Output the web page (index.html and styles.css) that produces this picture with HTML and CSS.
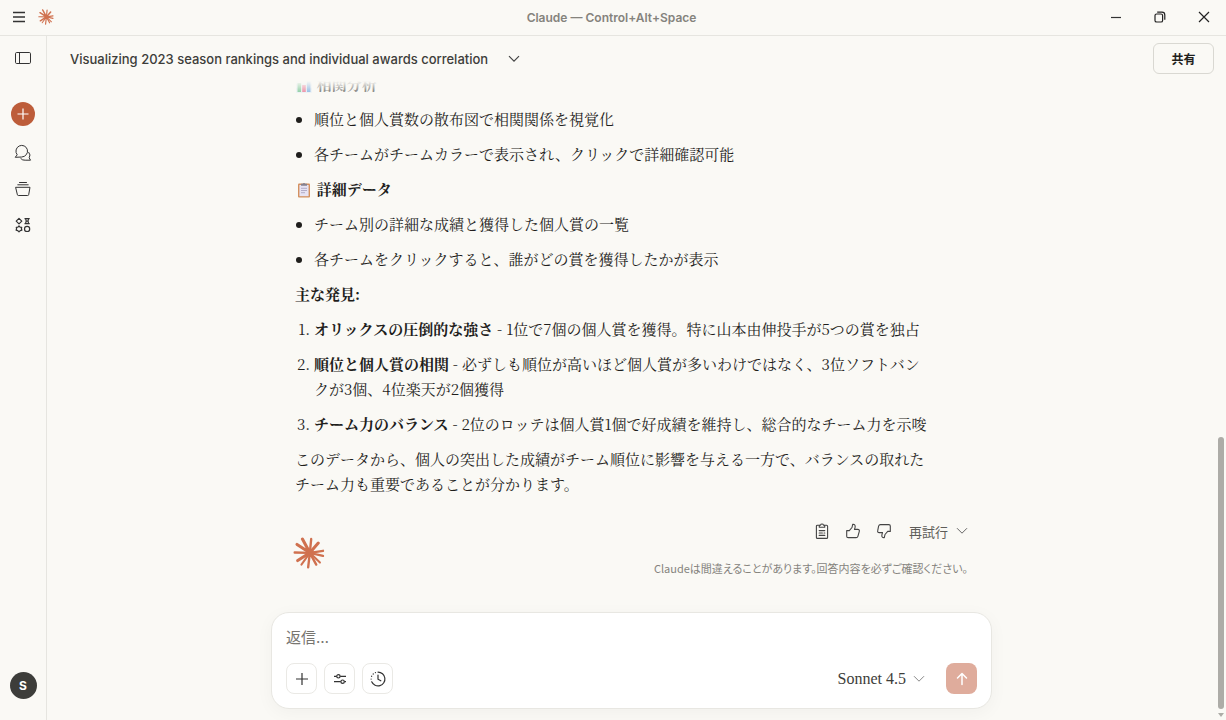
FILE: index.html
```html
<!DOCTYPE html>
<html lang="ja">
<head>
    <meta charset="UTF-8">
    <meta name="viewport" content="width=device-width, initial-scale=1.0">
    <title>Claude</title>
    <link rel="stylesheet" href="styles.css">
</head>
<body>

    <!-- shared logo -->
    <svg class="defs" aria-hidden="true">
        <symbol id="burst" viewBox="40 53 95 95">
            <g stroke="#d0714f" stroke-linecap="round" fill="none">
                <path stroke-width="9" d="M90 100L68 59M90 100L115 71M90 100L52 75M90 100L54 123"/>
                <path stroke-width="7" d="M90 100L94 59M90 100L129 94M90 100L129 109M90 100L109 135M90 100L85 143M90 100L45 99"/>
                <path stroke-width="6" d="M90 100L120 129M90 100L65 135"/>
            </g>
            <circle cx="90" cy="100" r="12" fill="#d0714f"/>
        </symbol>
    </svg>

    <header class="titlebar">
        <div class="titlebar-left">
            <button class="icon-btn" aria-label="メニュー">
                <svg width="14" height="14" viewBox="0 0 14 14" stroke="#333" stroke-width="1.5"><path d="M1 2.5h12M1 7h12M1 11.5h12"/></svg>
            </button>
            <svg class="logo-small" width="16" height="16"><use href="#burst"/></svg>
        </div>
        <div class="window-title">Claude — Control+Alt+Space</div>
        <div class="window-controls">
            <button class="icon-btn" aria-label="最小化">
                <svg width="12" height="12" viewBox="0 0 12 12" stroke="#333" stroke-width="1.2"><path d="M1 6.5h10"/></svg>
            </button>
            <button class="icon-btn" aria-label="元に戻す">
                <svg width="12" height="12" viewBox="0 0 12 12" stroke="#222" stroke-width="1.2" fill="none"><rect x="1" y="3" width="7.6" height="8" rx="1.6"/><path d="M3.2 1.2H8a2.8 2.8 0 0 1 2.8 2.8v4.8"/></svg>
            </button>
            <button class="icon-btn" aria-label="閉じる">
                <svg width="12" height="12" viewBox="0 0 12 12" stroke="#222" stroke-width="1.2"><path d="M1 1l10 10M11 1L1 11"/></svg>
            </button>
        </div>
    </header>

    <div class="app">
        <nav class="sidebar">
            <button class="icon-btn toggle" aria-label="サイドバー">
                <svg width="18" height="14" viewBox="0 0 18 14" fill="none" stroke="#333"><rect x="1.5" y="1.5" width="15" height="11" rx="1.2"/><path d="M5.5 1.5v11"/></svg>
            </button>
            <button class="icon-btn new-chat" aria-label="新規チャット">
                <svg width="12" height="12" viewBox="0 0 12 12" stroke="#fff" stroke-width="1.2"><path d="M6 .5v11M.5 6h11"/></svg>
            </button>
            <button class="icon-btn" aria-label="チャット">
                <svg width="18" height="18" viewBox="0 0 18 18" fill="none" stroke="#333" stroke-linejoin="round" stroke-linecap="round"><path d="M1.5 13l1.7-2.2A5.8 5.8 0 1 1 8 13z"/><path d="M14.8 8.4a4.4 4.4 0 0 1 .4 5.4l1.3 2.4h-5.3a5 5 0 0 1-4.4-1.6"/></svg>
            </button>
            <button class="icon-btn" aria-label="プロジェクト">
                <svg width="18" height="18" viewBox="0 0 18 18" fill="none" stroke="#333" stroke-linejoin="round" stroke-linecap="round"><path d="M5.5 2.5h7M3.8 4.8h10.4M2 7.3h14l-1.3 7.3a1 1 0 0 1-1 .9H4.3a1 1 0 0 1-1-.9z"/></svg>
            </button>
            <button class="icon-btn" aria-label="アーティファクト">
                <svg width="18" height="18" viewBox="0 0 18 18" fill="none" stroke="#333" stroke-width="1.2" stroke-linejoin="round"><path d="M5 2.3l2.8 2.8L5 7.9 2.2 5.1z"/><path d="M10.5 2.6h5.2M10.5 7.6h5.2M11.6 2.6c.7 1.5.7 3.5 0 5M14.6 2.6c-.7 1.5-.7 3.5 0 5M11.5 5.1h3.2"/><path d="M5 10l1.1 1.2 1.6.1-.3 1.5.5 1.4-1.6.4L5 15.8l-1.3-1.2-1.6-.4.5-1.4-.3-1.5 1.6-.1z"/><circle cx="13.1" cy="12.9" r="2.6"/></svg>
            </button>
            <button class="avatar" aria-label="アカウント">S</button>
        </nav>

        <main class="main">
            <div class="chat-header">
                <button class="chat-title">
                    Visualizing 2023 season rankings and individual awards correlation
                    <svg width="12" height="8" viewBox="0 0 12 8" fill="none" stroke="#444" stroke-width="1.2"><path d="M1 1.2l5 5 5-5"/></svg>
                </button>
                <button class="share-btn">共有</button>
            </div>

            <div class="thread">
                <div class="column">
                    <article class="message">
                        <p><strong>
                            <svg class="emoji" width="16" height="16" viewBox="0 0 16 16"><rect width="16" height="16" rx="1" fill="#e3edf5"/><path d="M0 4h16M0 8h16M0 12h16" stroke="#c9d9e6" stroke-width=".6"/><path fill="#3fae68" d="M1.5 6h3.6v9H1.5z"/><path fill="#e2436d" d="M6.2 8h3.6v7H6.2z"/><path fill="#4a90d9" d="M10.9 2h3.6v13h-3.6z"/></svg>
                            相関分析</strong></p>
                        <ul>
                            <li>順位と個人賞数の散布図で相関関係を視覚化</li>
                            <li>各チームがチームカラーで表示され、クリックで詳細確認可能</li>
                        </ul>
                        <p><strong>
                            <svg class="emoji" width="16" height="16" viewBox="0 0 16 16"><rect x="2" y="1.5" width="12" height="14" rx="1" fill="#d4915f"/><path fill="#e6e3f3" d="M3.4 3h9.2v11.2H3.4z"/><path fill="#85818f" d="M5 1.8h1.7a1.4 1.4 0 0 1 2.6 0H11v2H5z"/><path d="M5 6.3h6M5 8.5h6M5 10.7h4" stroke="#aba6c2" stroke-width=".9"/></svg>
                            詳細データ</strong></p>
                        <ul>
                            <li>チーム別の詳細な成績と獲得した個人賞の一覧</li>
                            <li>各チームをクリックすると、誰がどの賞を獲得したかが表示</li>
                        </ul>
                        <p><strong>主な発見:</strong></p>
                        <ol>
                            <li><strong>オリックスの圧倒的な強さ</strong> - 1位で7個の個人賞を獲得。特に山本由伸投手が5つの賞を独占</li>
                            <li><strong>順位と個人賞の相関</strong> - 必ずしも順位が高いほど個人賞が多いわけではなく、3位ソフトバンクが3個、4位楽天が2個獲得</li>
                            <li><strong>チーム力のバランス</strong> - 2位のロッテは個人賞1個で好成績を維持し、総合的なチーム力を示唆</li>
                        </ol>
                        <p>このデータから、個人の突出した成績がチーム順位に影響を与える一方で、バランスの取れたチーム力も重要であることが分かります。</p>
                    </article>

                    <div class="message-footer">
                        <svg class="logo-large" width="32" height="32"><use href="#burst"/></svg>
                        <div class="footer-right">
                            <div class="actions">
                                <button class="icon-btn" aria-label="コピー">
                                    <svg width="16" height="18" viewBox="0 0 16 18" fill="none" stroke="#444" stroke-width="1.1" stroke-linecap="round" stroke-linejoin="round"><path d="M5.3 3.2H3.4a1 1 0 0 0-1 1v11.2a1 1 0 0 0 1 1h9.2a1 1 0 0 0 1-1V4.2a1 1 0 0 0-1-1h-1.9"/><path d="M5.3 5.3V3.2h1.1a1.7 1.7 0 0 1 3.2 0h1.1v2.1zM5.2 8.6h5.6M5.2 11h3.2M10 11h.8M5.2 13.4h5.6"/></svg>
                                </button>
                                <button class="icon-btn" aria-label="良い回答">
                                    <svg width="16" height="16" viewBox="0 0 16 16" fill="none" stroke="#444" stroke-width="1.1" stroke-linejoin="round"><path d="M1.7 7.6h2.6l2.7-3.1.7-3.1c2-.3 2.8 1 2.4 2.8l-.6 2.2h3.3c1.2 0 1.8.8 1.5 1.9l-1.4 5c-.3.9-.9 1.3-1.8 1.3H3.2c-1 0-1.5-.5-1.5-1.4z"/></svg>
                                </button>
                                <button class="icon-btn" aria-label="悪い回答">
                                    <svg width="16" height="16" viewBox="0 0 16 16" fill="none" stroke="#444" stroke-width="1.1" stroke-linejoin="round"><path d="M14.3 8.4h-2.6L9 11.5l-.7 3.1c-2 .3-2.8-1-2.4-2.8l.6-2.2H3.2c-1.2 0-1.8-.8-1.5-1.9l.9-4.6c.3-.9.9-1.5 1.8-1.5h8.4c1 0 1.5.5 1.5 1.4z"/></svg>
                                </button>
                                <button class="retry-btn">再試行
                                    <svg width="12" height="8" viewBox="0 0 12 8" fill="none" stroke="#666"><path d="M1 1.2l5 5 5-5"/></svg>
                                </button>
                            </div>
                            <p class="disclaimer">Claudeは間違えることがあります。回答内容を必ずご確認ください。</p>
                        </div>
                    </div>
                </div>
            </div>

            <form class="composer">
                <textarea rows="1" placeholder="返信…" aria-label="返信"></textarea>
                <div class="composer-row">
                    <button type="button" class="tool-btn" aria-label="追加">
                        <svg width="14" height="14" viewBox="0 0 14 14" stroke="#333" stroke-width="1.2"><path d="M7 1v12M1 7h12"/></svg>
                    </button>
                    <button type="button" class="tool-btn" aria-label="設定">
                        <svg width="14" height="12" viewBox="0 0 14 12" fill="none" stroke="#333" stroke-width="1.2"><path d="M1 3.3h2.6M7.2 3.3H13M1 8.7h6.8M11.4 8.7H13"/><circle cx="5.4" cy="3.3" r="1.7"/><circle cx="9.6" cy="8.7" r="1.7"/></svg>
                    </button>
                    <button type="button" class="tool-btn" aria-label="履歴">
                        <svg width="16" height="16" viewBox="0 0 16 16" fill="none" stroke="#333" stroke-width="1.2" stroke-linecap="round"><path d="M8 1.1A6.9 6.9 0 1 1 1.7 10.8"/><path d="M8 4v4.2l2.8 1.6"/><path d="M1.1 8v.1M1.6 5.3l.1-.1M3.2 3l.1-.1M5.4 1.6h.1"/></svg>
                    </button>
                    <button type="button" class="model-btn">Sonnet 4.5
                        <svg width="12" height="8" viewBox="0 0 12 8" fill="none" stroke="#888"><path d="M1 1.2l5 5 5-5"/></svg>
                    </button>
                    <button type="submit" class="send-btn" aria-label="送信">
                        <svg width="14" height="14" viewBox="0 0 14 14" fill="none" stroke="#fff" stroke-width="1.5" stroke-linecap="round" stroke-linejoin="round"><path d="M7 12.5v-11M2.5 6L7 1.5 11.5 6"/></svg>
                    </button>
                </div>
            </form>

            <div class="scrollbar"><span class="thumb"></span><span class="arrow"></span></div>
        </main>
    </div>

</body>
</html>
```
FILE: styles.css
```css
* {
    box-sizing: border-box;
}
body {
    margin: 0;
    height: 100vh;
    display: flex;
    flex-direction: column;
    overflow: hidden;
    background: #faf9f5;
    color: #1f1e1c;
    font-family: Inter, "Noto Sans CJK JP", sans-serif;
}
button {
    border: none;
    background: none;
    padding: 0;
    color: inherit;
    font-family: inherit;
    cursor: pointer;
}
svg {
    flex: none;
}
.defs {
    position: absolute;
    width: 0;
    height: 0;
}
.icon-btn {
    width: 24px;
    height: 24px;
    display: flex;
    align-items: center;
    justify-content: center;
    flex: none;
}

/* title bar */
.titlebar {
    flex: none;
    height: 36px;
    display: grid;
    grid-template-columns: 1fr auto 1fr;
    align-items: center;
    padding: 0 10px 1px 7px;
    border-bottom: 1px solid #e6e5e0;
}
.titlebar-left {
    display: flex;
    align-items: center;
    gap: 7px;
}
.window-title {
    font-size: 12px;
    font-weight: 600;
    color: #85837d;
}
.window-controls {
    display: flex;
    justify-content: flex-end;
    gap: 20px;
}

/* sidebar */
.app {
    flex: 1;
    min-height: 0;
    display: flex;
}
.sidebar {
    flex: none;
    width: 47px;
    display: flex;
    flex-direction: column;
    align-items: center;
    gap: 12px;
    padding: 10px 0 21px;
    border-right: 1px solid #e6e5e0;
}
.toggle {
    margin-bottom: 20px;
}
.new-chat {
    margin-bottom: 3px;
    border-radius: 50%;
    background: #bd5d3a;
}
.avatar {
    width: 27px;
    height: 27px;
    margin-top: auto;
    border-radius: 50%;
    background: #3d3d3a;
    color: #fff;
    font-size: 12px;
    font-weight: 700;
}

/* chat */
.main {
    position: relative;
    flex: 1;
    min-width: 0;
    display: flex;
    flex-direction: column;
}
.chat-header {
    flex: none;
    height: 45px;
    display: flex;
    align-items: center;
    justify-content: space-between;
    padding: 0 12px 0 23px;
}
.chat-title {
    display: flex;
    align-items: center;
    gap: 20px;
    font-size: 13px;
    font-weight: 500;
    color: #3d3d3a;
}
.share-btn {
    width: 61px;
    height: 31px;
    border: 1px solid #d9d8d2;
    border-radius: 6px;
    font-size: 12px;
    font-weight: 700;
}
.thread {
    position: relative;
    flex: 1;
    min-height: 0;
    display: flex;
    flex-direction: column;
    justify-content: flex-end;
    overflow: hidden;
    padding-right: 10px;
}
.thread::before {
    content: "";
    position: absolute;
    z-index: 1;
    top: 0;
    left: 0;
    right: 0;
    height: 20px;
    background: linear-gradient(#faf9f5, #faf9f500);
}
.column {
    width: 100%;
    max-width: 721px;
    margin: 0 auto;
    padding: 0 24px 34px;
}
.message {
    max-width: 636px;
    font-family: "Noto Serif CJK JP", "Noto Sans CJK JP", serif;
    font-size: 15px;
    line-height: 25px;
}
.message p, .message ul, .message ol {
    margin: 0 0 10px;
    padding: 0;
}
.message ul, .message ol {
    display: grid;
    gap: 10px;
    padding-left: 19px;
}
.message p:last-child {
    margin: 0;
}
.emoji {
    margin: 0 1px;
    vertical-align: -3px;
}
.message-footer {
    display: flex;
    justify-content: space-between;
    align-items: flex-end;
    margin-top: 19px;
}
.logo-large {
    margin: 0 0 9px -2px;
}
.actions {
    display: flex;
    align-items: center;
    justify-content: flex-end;
    gap: 7px;
    height: 32px;
}
.retry-btn {
    display: flex;
    align-items: center;
    gap: 8px;
    margin-left: 6px;
    font-size: 13px;
    color: #5e5d59;
}
.disclaimer {
    margin: 11px 0 0;
    font-family: "Noto Sans CJK JP", sans-serif;
    font-size: 11px;
    line-height: 20px;
    color: #85837d;
    font-feature-settings: "palt";
    text-align: right;
}

/* composer */
.composer {
    flex: none;
    align-self: center;
    width: calc(100% - 10px);
    max-width: 721px;
    margin: 0 10px 11px 0;
    padding: 13px 14px 14px;
    border: 1px solid #e8e7e2;
    border-radius: 18px;
    background: #fff;
    box-shadow: 0 4px 18px rgba(0, 0, 0, 0.04);
}
.composer textarea {
    display: block;
    width: 100%;
    height: 24px;
    margin-bottom: 13px;
    padding: 0;
    border: none;
    outline: none;
    resize: none;
    overflow: hidden;
    font-family: Inter, "Noto Sans CJK JP", sans-serif;
    font-size: 15px;
    line-height: 24px;
}
.composer textarea::placeholder {
    color: #77756f;
}
.composer-row {
    display: flex;
    align-items: center;
    gap: 7px;
}
.tool-btn, .send-btn {
    width: 31px;
    height: 31px;
    display: flex;
    align-items: center;
    justify-content: center;
    border: 1px solid #eae9e5;
    border-radius: 8px;
}
.model-btn {
    display: flex;
    align-items: center;
    gap: 7px;
    margin-left: auto;
    margin-right: 14px;
    font-family: "Liberation Serif", serif;
    font-size: 16px;
    color: #3d3d3a;
}
.send-btn {
    border: none;
    background: #dfac9c;
}

/* scroll indicator */
.scrollbar {
    position: absolute;
    right: 2px;
    bottom: 3px;
    width: 6px;
    height: 41%;
    display: flex;
    flex-direction: column;
    gap: 4px;
}
.thumb {
    flex: 1;
    border-radius: 3px;
    background: #adaca7;
}
.arrow {
    border: 3px solid transparent;
    border-top: 4px solid #adaca7;
    border-bottom: none;
}
```
